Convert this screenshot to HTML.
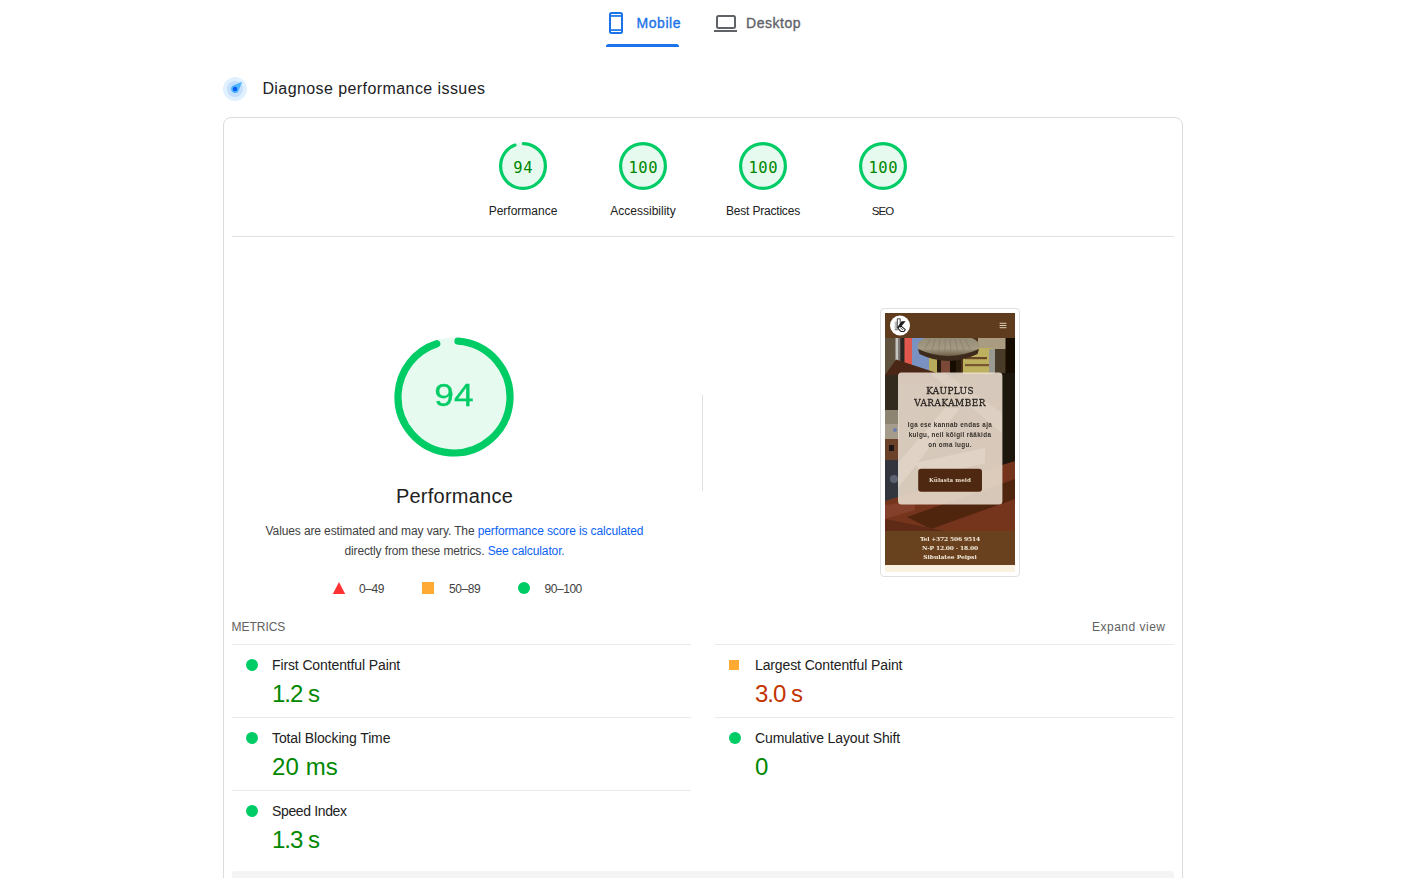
<!DOCTYPE html>
<html lang="en">
<head>
<meta charset="utf-8">
<title>PageSpeed Insights</title>
<style>
*{box-sizing:border-box;margin:0;padding:0}
html,body{width:1402px;height:878px;overflow:hidden;background:#fff}
body{position:relative;font-family:"Liberation Sans",sans-serif;color:#212121;-webkit-font-smoothing:antialiased}
.abs{position:absolute}
.t{position:absolute;white-space:nowrap;line-height:1}
/* tabs */
.tab-m{left:636.5px;top:16px;font-size:14px;color:#1a73e8;letter-spacing:.55px;-webkit-text-stroke:.35px #1a73e8}
.tab-d{left:746px;top:16px;font-size:14px;color:#5f6368;letter-spacing:.55px;-webkit-text-stroke:.35px #5f6368}
.tab-ul{left:606px;top:44px;width:73px;height:3px;background:#1a73e8;border-radius:2.5px 2.5px 0 0}
/* heading */
.h{left:262.4px;top:80.8px;font-size:16px;color:#202124;letter-spacing:.42px}
/* card */
.card{left:223px;top:117px;width:960px;height:800px;border:1px solid #dadce0;border-radius:8px}
.hr{height:1px;background:#e0e0e0}
/* gauges */
.g{position:absolute;top:142px;width:48px;height:48px}
.gn{position:absolute;top:159.5px;width:48px;text-align:center;font-family:"DejaVu Sans Mono","Liberation Mono",monospace;font-size:15.5px;line-height:16px;color:#080;letter-spacing:.6px;text-indent:.6px}
.gl{position:absolute;top:204px;width:120px;text-align:center;font-size:12px;line-height:14px;color:#212121}
/* big gauge */
.bg{left:394.4px;top:337.4px;width:120px;height:120px}
.bgn{left:393.8px;top:380px;width:120px;text-align:center;font-size:31px;line-height:31px;color:#0c6;-webkit-text-stroke:.3px #0c6;transform:scaleX(1.14);transform-origin:50% 50%}
.bgl{left:254.5px;top:484px;width:400px;text-align:center;font-size:20px;line-height:24px;color:#212121;letter-spacing:.25px}
.desc{left:232px;top:521px;width:445px;text-align:center;font-size:12px;line-height:20px;color:#424242;letter-spacing:-.12px}
.desc a,.lnk{color:#0b62f5;text-decoration:none}
.lg{font-size:12px;color:#424242;top:583px;letter-spacing:-.45px}
/* metrics */
.mh{font-size:12px;color:#616161;letter-spacing:0;top:621px}
.mt{font-size:14px;color:#212121;letter-spacing:-.12px}
.mv{font-size:24px;color:#080;letter-spacing:-1px}
.dot{position:absolute;width:12px;height:12px;border-radius:50%;background:#0c6}
.st{position:absolute;left:0;width:520px;text-align:center;white-space:nowrap;line-height:1}
.ser{font-family:"DejaVu Serif","Liberation Serif",serif}
.sq{position:absolute;width:10px;height:10px;background:#fa3}
</style>
</head>
<body>

<!-- Tabs -->
<svg class="abs" style="left:609px;top:12px" width="14" height="22" viewBox="0 0 14 22"><rect x="1" y="1" width="12" height="20" rx="1.5" fill="none" stroke="#1a73e8" stroke-width="2"/><rect x="1" y="3.1" width="12" height="1.7" fill="#1a73e8"/><rect x="1" y="17.2" width="12" height="1.7" fill="#1a73e8"/></svg>
<span class="t tab-m">Mobile</span>
<div class="abs tab-ul"></div>
<svg class="abs" style="left:714px;top:15px" width="24" height="18" viewBox="0 0 24 18"><rect x="3" y="1" width="18" height="12" rx="1.5" fill="none" stroke="#5f6368" stroke-width="2"/><rect x="0" y="15" width="23" height="2" fill="#5f6368"/></svg>
<span class="t tab-d">Desktop</span>

<!-- Heading -->
<svg class="abs" style="left:223px;top:77px" width="24" height="24" viewBox="0 0 24 24"><circle cx="12" cy="12" r="12" fill="#e1f0fe"/><circle cx="12" cy="12" r="8" fill="#c4defd"/><path d="M19.2 4.8 L15.2 14.4 A4 4 0 1 1 9.6 8.8 Z" fill="#4db4ff"/><circle cx="12" cy="12" r="2.2" fill="#0b57f5"/></svg>
<span class="t h">Diagnose performance issues</span>

<!-- Card -->
<div class="abs card"></div>

<!-- Top gauges -->
<svg class="g" style="left:499px" viewBox="0 0 120 120"><circle cx="60" cy="60" r="60" fill="#e6faf0"/><circle cx="60" cy="60" r="56" fill="none" stroke="#0c6" stroke-width="8" stroke-linecap="round" stroke-dasharray="328.2 351.86" transform="rotate(-89 60 60)"/></svg>
<svg class="g" style="left:619px" viewBox="0 0 120 120"><circle cx="60" cy="60" r="56" fill="#e6faf0" stroke="#0c6" stroke-width="8"/></svg>
<svg class="g" style="left:739px" viewBox="0 0 120 120"><circle cx="60" cy="60" r="56" fill="#e6faf0" stroke="#0c6" stroke-width="8"/></svg>
<svg class="g" style="left:859px" viewBox="0 0 120 120"><circle cx="60" cy="60" r="56" fill="#e6faf0" stroke="#0c6" stroke-width="8"/></svg>
<div class="gn" style="left:499px">94</div>
<div class="gn" style="left:619px">100</div>
<div class="gn" style="left:739px">100</div>
<div class="gn" style="left:859px">100</div>
<div class="gl" style="left:463px">Performance</div>
<div class="gl" style="left:583px">Accessibility</div>
<div class="gl" style="left:703px;letter-spacing:-.2px">Best Practices</div>
<div class="gl" style="left:823px;font-size:11.5px;letter-spacing:-1px;text-indent:-1px">SEO</div>

<div class="abs hr" style="left:232px;top:236px;width:942px"></div>

<!-- Big gauge -->
<svg class="abs bg" viewBox="0 0 120 120"><circle cx="60" cy="60" r="59.6" fill="#e6faf0"/><circle cx="60" cy="60" r="56" fill="none" stroke="#0c6" stroke-width="7.2" stroke-linecap="round" stroke-dasharray="329.8 351.86" transform="rotate(-85.9 60 60)"/></svg>
<div class="abs bgn">94</div>
<div class="abs bgl">Performance</div>
<div class="abs desc">Values are estimated and may vary. The <a>performance score is calculated</a><br>directly from these metrics. <a>See calculator.</a></div>

<!-- Legend -->
<svg class="abs" style="left:332px;top:582.3px" width="14" height="12" viewBox="0 0 14 12"><path d="M7 0 L13.2 12 L0.8 12 Z" fill="#f33"/></svg>
<span class="t lg" style="left:359px">0–49</span>
<div class="abs" style="left:422px;top:582.3px;width:12px;height:12px;background:#fa3"></div>
<span class="t lg" style="left:449px">50–89</span>
<div class="abs" style="left:517.8px;top:582.3px;width:12.2px;height:12px;border-radius:50%;background:#0c6"></div>
<span class="t lg" style="left:544.5px">90–100</span>

<!-- vertical divider -->
<div class="abs" style="left:702px;top:395px;width:1px;height:96px;background:#e0e0e0"></div>

<!-- Screenshot thumbnail placeholder -->
<div class="abs" id="thumb" style="left:880px;top:308px;width:140px;height:269px;border:1px solid #e0e0e0;border-radius:4px;background:#fff"></div>
<svg class="abs" id="shot" style="left:885px;top:313px" width="130" height="259" viewBox="0 0 130 259">
<defs>
<filter id="bl" x="-5%" y="-5%" width="110%" height="110%"><feGaussianBlur stdDeviation="0.45"/></filter>
<linearGradient id="wood" x1="0" y1="0" x2="1" y2="1"><stop offset="0" stop-color="#5a3a22"/><stop offset=".5" stop-color="#4a2c16"/><stop offset="1" stop-color="#6b2f18"/></linearGradient>
<linearGradient id="dome" x1="0" y1="0" x2="0" y2="1"><stop offset="0" stop-color="#8f8672"/><stop offset=".6" stop-color="#a59b84"/><stop offset="1" stop-color="#5a4a34"/></linearGradient>
<clipPath id="cp"><rect x="0" y="25" width="130" height="227"/></clipPath>
</defs>
<rect x="0" y="0" width="130" height="259" fill="#fbf1e0"/>
<g clip-path="url(#cp)">
<rect x="0" y="25" width="130" height="227" fill="url(#wood)"/>
<g filter="url(#bl)">
<!-- top scene -->
<rect x="0" y="25" width="12" height="40" fill="#5f5240"/>
<rect x="10.5" y="25" width="3" height="28" fill="#c4c4c1"/>
<rect x="13.5" y="25" width="2" height="29" fill="#77777a"/>
<rect x="15.5" y="25" width="4" height="30" fill="#2b2622"/>
<rect x="19.5" y="25" width="7.5" height="27" fill="#e0594d"/>
<rect x="27" y="25" width="20" height="34" fill="#7a92c2"/>
<rect x="44" y="45" width="14" height="16" fill="#b9ab5c"/>
<rect x="93" y="25" width="28" height="11" fill="#a99c80"/>
<rect x="78" y="35" width="30" height="26" fill="#bdb05e"/>
<rect x="80" y="44" width="22" height="2.2" fill="#6a4528"/>
<rect x="80" y="51" width="24" height="2.2" fill="#7a5530"/>
<rect x="104" y="36" width="8" height="24" fill="#9a9a92"/>
<rect x="110" y="36" width="10" height="24" fill="#4a3a2a"/>
<rect x="52" y="44" width="24" height="18" fill="#2a1a0e"/>
<rect x="56" y="46" width="9" height="14" fill="#7a4a38"/>
<rect x="65" y="46" width="6" height="14" fill="#120c06"/>
<ellipse cx="63.5" cy="33" rx="31" ry="12.5" fill="url(#dome)"/>
<g stroke="#6f6756" stroke-width=".5" opacity=".7"><path d="M45 26 L40 36"/><path d="M50 26 L47 37"/><path d="M55 26 L53.5 38"/><path d="M60 26 L60 38"/><path d="M65 26 L66 38"/><path d="M70 26 L72.5 38"/><path d="M75 26 L79 37"/><path d="M80 26 L85 36"/></g>
<path d="M33 36 Q63 50 94 36 L92.5 41 Q63 55 34.5 41 Z" fill="#3c2c1a"/>
<!-- right dark column -->
<rect x="120.5" y="25" width="9.5" height="150" fill="#140e05"/>
<rect x="117" y="60" width="13" height="105" fill="#1a130b"/>
<!-- wood diagonal top-left -->
<path d="M0 62 L11 46.5 L52 60 L52 70 L0 70 Z" fill="#4a2612"/>
<rect x="0" y="62" width="14" height="38" fill="#33291a"/>
<rect x="0" y="97" width="14" height="16" fill="#8d8472"/>
<rect x="0" y="111" width="14" height="16" fill="#a59c8c"/>
<circle cx="10" cy="117" r="2" fill="#6d7fae"/>
<rect x="0" y="126" width="14" height="22" fill="#6a432b"/>
<rect x="4" y="132" width="5" height="6" fill="#1c1712"/>
<!-- dark object bottom-left -->
<rect x="0" y="147" width="16" height="43" fill="#33353c"/>
<circle cx="9" cy="166" r="4" fill="#5c6272"/>
<!-- lower wood -->
<path d="M0 188 L130 148 L130 218 L0 218 Z" fill="#74341d"/>
<path d="M22 204 L130 166 L130 186 L46 216 Z" fill="#50250f"/>
<path d="M0 192 L30 188 L30 197 L0 206 Z" fill="#84402a"/>
<path d="M0 206 L60 218 L0 218 Z" fill="#5e2a14"/>
</g>
<!-- faint photo streaks seen through the card -->
<g opacity=".35"><path d="M13 150 L60 95 L75 95 L13 175 Z" fill="#fff8ee"/><path d="M60 60 L117 100 L117 120 L45 60 Z" fill="#cbbfae"/><path d="M30 150 L100 135 L100 150 L40 165 Z" fill="#fffaf2"/></g>
<!-- card -->
<rect x="13" y="59.5" width="104.4" height="132" rx="3.5" fill="#efe4d7" fill-opacity=".85"/>
<!-- footer overlay -->
<rect x="0" y="218" width="130" height="34" fill="#6b431f" fill-opacity=".93"/>
</g>
<!-- header -->
<rect x="0" y="0" width="130" height="25" fill="#603c1e"/>
<circle cx="15" cy="12.5" r="10" fill="#fff"/>
<g stroke-linejoin="round"><path d="M9.7 8.7 L12.2 8.3 V16.7 H9.7 Z" fill="#bdbdbd"/><path d="M12.3 5.8 H15.2 V12.4 L12.3 15 Z" fill="#fff" stroke="#262626" stroke-width=".85"/><path d="M16.6 8.3 H20.6 L15.4 14.5 L12.2 14.5 Z" fill="#1d1d1d"/><path d="M15.3 12.3 L20.3 16.7 L19 18.4 H15.9 L12.9 15.4 Z" fill="#fff" stroke="#1d1d1d" stroke-width="1.05"/><path d="M14.6 14 L18 17" fill="none" stroke="#1d1d1d" stroke-width=".7"/><path d="M9.8 16.8 H13.4" fill="none" stroke="#3a3a3a" stroke-width=".6"/></g>
<g stroke="#e9dcc6" stroke-width=".9"><path d="M114.6 10.3 H121.4"/><path d="M114.6 12.5 H121.4"/><path d="M114.6 14.7 H121.4"/></g>
<rect x="33.2" y="155.8" width="63.8" height="23" rx="3" fill="#4f2811"/>
</svg>
<div class="abs" id="shotText" style="left:885px;top:313px;width:520px;height:1036px;transform:scale(.25);transform-origin:0 0">
<div class="st ser" id="st1" style="top:292.7px;font-size:35.6px;letter-spacing:1.4px;color:#2b2622;-webkit-text-stroke:1.2px #2b2622">KAUPLUS</div>
<div class="st ser" id="st2" style="top:339.5px;font-size:35.6px;letter-spacing:1.9px;color:#2b2622;-webkit-text-stroke:1.2px #2b2622">VARAKAMBER</div>
<div class="st" id="st3" style="top:433.1px;font-size:25.2px;font-weight:bold;color:#35302a;letter-spacing:1.45px">Iga ese kannab endas aja</div>
<div class="st" id="st4" style="top:473.9px;font-size:25.2px;font-weight:bold;color:#35302a;letter-spacing:1.45px">kulgu, neil kõigil rääkida</div>
<div class="st" id="st5" style="top:513.9px;font-size:25.2px;font-weight:bold;color:#35302a;letter-spacing:1.45px">on oma lugu.</div>
<div class="st ser" id="st6" style="top:658.2px;font-size:22.4px;font-weight:bold;color:#eadfcd;letter-spacing:.2px">Külasta meid</div>
<div class="st ser" id="st7" style="top:892.5px;font-size:24px;font-weight:bold;color:#f4ebdc;letter-spacing:-.65px">Tel +372 506 9514</div>
<div class="st ser" id="st8" style="top:927.7px;font-size:24px;font-weight:bold;color:#f4ebdc;letter-spacing:-.65px">N-P 12.00 - 18.00</div>
<div class="st ser" id="st9" style="top:962.9px;font-size:24px;font-weight:bold;color:#f4ebdc;letter-spacing:-.2px">Sibulatee Peipsi</div>
</div>


<!-- Metrics -->
<span class="t mh" style="left:231.6px;letter-spacing:-.05px">METRICS</span>
<span class="t mh" style="left:1092px;letter-spacing:.5px">Expand view</span>

<div class="abs hr" style="left:232px;top:644px;width:459px;background:#ebebeb"></div>
<div class="abs hr" style="left:715px;top:644px;width:459px;background:#ebebeb"></div>
<div class="abs hr" style="left:232px;top:717px;width:459px;background:#ebebeb"></div>
<div class="abs hr" style="left:715px;top:717px;width:459px;background:#ebebeb"></div>
<div class="abs hr" style="left:232px;top:790px;width:459px;background:#ebebeb"></div>

<div class="dot" style="left:246px;top:659px"></div>
<span class="t mt" style="left:272px;top:658px">First Contentful Paint</span>
<span class="t mv" style="left:272px;top:682px">1.2 s</span>

<div class="dot" style="left:246px;top:732px"></div>
<span class="t mt" style="left:272px;top:731px">Total Blocking Time</span>
<span class="t mv" style="left:272px;top:755px;letter-spacing:.1px">20 ms</span>

<div class="dot" style="left:246px;top:805px"></div>
<span class="t mt" style="left:272px;top:804px;letter-spacing:-.36px">Speed Index</span>
<span class="t mv" style="left:272px;top:828px">1.3 s</span>

<div class="sq" style="left:729px;top:660px"></div>
<span class="t mt" style="left:755px;top:658px">Largest Contentful Paint</span>
<span class="t mv" style="left:755px;top:682px;color:#c33300">3.0 s</span>

<div class="dot" style="left:729px;top:732px"></div>
<span class="t mt" style="left:755px;top:731px">Cumulative Layout Shift</span>
<span class="t mv" style="left:755px;top:755px">0</span>

<!-- bottom grey box -->
<div class="abs" style="left:232px;top:871px;width:942px;height:20px;background:#f4f4f4;border-radius:2.5px 2.5px 0 0"></div>

</body>
</html>
